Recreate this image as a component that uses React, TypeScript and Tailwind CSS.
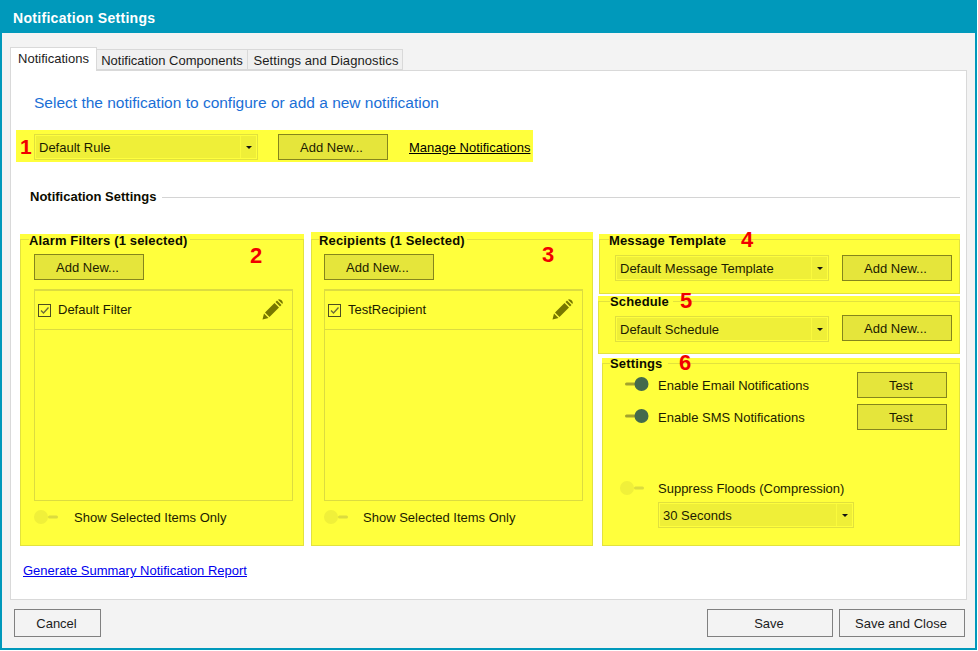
import type { ReactNode } from "react"

const font = { fontFamily: '"Liberation Sans", Arial, sans-serif' }

function YButton({ className = "" }: { className?: string }) {
  return (
    <button className={`flex h-[26px] w-[110px] items-center justify-center border border-[#85851c] bg-[#e5e53b] pr-[3px] pt-[2px] text-[13px] text-[#1c1c00] ${className}`}>
      Add New...
    </button>
  )
}

function TestButton({ className = "" }: { className?: string }) {
  return (
    <button className={`flex h-[26px] w-[90px] items-center justify-center border border-[#85851c] bg-[#e5e53b] pr-[2px] pt-[2px] text-[13px] text-[#1c1c00] ${className}`}>
      Test
    </button>
  )
}

function Select({ label, className = "" }: { label: string; className?: string }) {
  return (
    <div className={`flex h-[26px] items-stretch border border-[#e0e03e] p-px text-[13px] text-[#1c1c00] ${className}`}>
      <div className="flex flex-1 items-center bg-[#efef38] pl-[3px] pt-px">{label}</div>
      <div className="flex w-[16px] items-center justify-center border-l border-[#fafa3c] bg-[#efef38]">
        <span className="h-0 w-0 border-x-[3px] border-t-[3px] border-x-transparent border-t-[#111]" />
      </div>
    </div>
  )
}

function Toggle({ on, className = "" }: { on?: boolean; className?: string }) {
  return (
    <svg width="24" height="14" viewBox="0 0 24 14" className={className}>
      {on ? (
        <>
          <rect x="0" y="5.5" width="12" height="3" rx="1.5" fill="#a3a32c" />
          <circle cx="16.5" cy="7" r="7" fill="#446a4c" />
        </>
      ) : (
        <>
          <circle cx="7" cy="7" r="7" fill="#f0f03a" />
          <rect x="14" y="5.5" width="10" height="3" rx="1.5" fill="#dcdc3e" />
        </>
      )}
    </svg>
  )
}

function Pencil({ className = "" }: { className?: string }) {
  return (
    <svg width="21" height="21" viewBox="0 0 21 21" className={className}>
      <g fill="#787800">
        <path d="M0.5 20.5 L2 14.5 L6.5 19 Z" />
        <path d="M3 13.5 L12.5 4 L17 8.5 L7.5 18 Z" />
        <path d="M13.5 3 L15 1.5 L19.5 6 L18 7.5 Z" />
        <path d="M16 0.8 L17 0.2 Q20.8 1 20.8 4 L20.3 5 Z" />
      </g>
    </svg>
  )
}

function Num({ n, className }: { n: string; className: string }) {
  return <span className={`absolute text-[22px] font-bold leading-none text-[#f00000] ${className}`}>{n}</span>
}

function Group({ title, legend, children, className = "" }: { title: string; legend: string; children: ReactNode; className?: string }) {
  return (
    <div className={`relative bg-[#ffff3c] ${className}`}>
      <fieldset className="h-full border border-[#e2e23e]">
        <legend className={`text-[13px] font-bold tracking-[0.15px] text-[#0c0c00] ${legend}`}>{title}</legend>
        {children}
      </fieldset>
    </div>
  )
}

function FilterList({ item, pencilClass }: { item: string; pencilClass: string }) {
  return (
    <div className="mt-[9px] h-[212px] w-[259px] border border-t-[2px] border-[#dcdc40]">
      <div className="relative flex h-[39px] items-center border-b border-[#dcdc40] pl-[3px] text-[13px] text-[#1c1c00]">
        <span className="flex h-[13px] w-[13px] items-center justify-center border border-[#4d4d22]">
          <svg width="11" height="11" viewBox="0 0 11 11" fill="none" stroke="#6b6b3a" strokeWidth="1.3">
            <path d="M2 5.5 L4.5 8 L9.5 2.5" />
          </svg>
        </span>
        <span className="ml-[7px]">{item}</span>
        <Pencil className={pencilClass} />
      </div>
    </div>
  )
}

function ShowSelected({ textMargin }: { textMargin: string }) {
  return (
    <div className="mt-[9px] flex h-[14px] items-center text-[13px] text-[#1c1c00]">
      <Toggle />
      <span className={`pt-[2px] ${textMargin}`}>Show Selected Items Only</span>
    </div>
  )
}

export default function App() {
  return (
    <div className="h-[651px] w-[978px] overflow-hidden bg-white" style={font}>
      <div className="flex h-[650px] w-[977px] flex-col border-x-[2px] border-b-[2px] border-[#0099bb] bg-[#f3f3f3]">
        <div className="flex h-[33px] shrink-0 items-center bg-[#0099bb] pl-[11px] pt-[4px] text-[14px] font-bold tracking-[0.3px] text-white">
          Notification Settings
        </div>

        <div className="flex flex-1 flex-col px-[8px] pt-[14px]">
          {/* tabs */}
          <div className="flex h-[23px] items-end text-[13px] text-[#1c1c1c]">
            <div className="z-10 -mb-px flex h-[24px] w-[87px] items-center justify-center border border-b-0 border-[#d9d9d9] bg-white pb-[2px]">
              Notifications
            </div>
            <div className="flex h-[21px] w-[151px] items-center justify-center border-y border-r border-[#d9d9d9] bg-[#f0f0f0] pt-[2px]">
              Notification Components
            </div>
            <div className="flex h-[21px] w-[155px] items-center justify-center border-y border-r border-[#d9d9d9] bg-[#f0f0f0] pl-[2px] pt-[2px] tracking-[0.08px]">
              Settings and Diagnostics
            </div>
          </div>

          {/* tab panel */}
          <div className="h-[530px] border border-[#d9d9d9] bg-white">
            <h1 className="ml-[23px] mt-[22px] text-[15.5px] leading-[20px] text-[#1a6fd6]">
              Select the notification to configure or add a new notification
            </h1>

            <div className="relative ml-[5px] mt-[17px] flex h-[32px] w-[517px] items-center bg-[#ffff3c] pl-[18px] pt-[2px] text-[13px]">
              <span className="absolute left-[4px] top-[6px] text-[21px] font-bold leading-none text-[#f00000]">1</span>
              <Select label="Default Rule" className="w-[224px]" />
              <YButton className="ml-[20px]" />
              <a className="ml-[21px] pt-px text-black underline">Manage Notifications</a>
            </div>

            <div className="ml-[19px] mt-[26px] flex h-[18px] items-center">
              <span className="text-[13px] font-bold text-[#0c0c00]">Notification Settings</span>
              <span className="ml-[6px] mr-[6px] h-px flex-1 bg-[#d4d4d4]" />
            </div>

            <div className="mt-[26px] flex items-end pl-[9px]">
              <Group title="Alarm Filters (1 selected)" legend="ml-[8px] pr-[2px] pt-[4px] leading-[6px]" className="h-[312px] w-[284px]">
                <Num n="2" className="left-[230px] top-[11px]" />
                <div className="pl-[13px] pt-[10px]">
                  <YButton />
                  <FilterList item="Default Filter" pencilClass="absolute right-[9px] top-[8px]" />
                  <ShowSelected textMargin="ml-[16px]" />
                </div>
              </Group>

              <Group title="Recipients (1 Selected)" legend="ml-[7px] pr-[2px] pt-[4px] leading-[6px]" className="ml-[7px] h-[314px] w-[282px] pt-[2px]">
                <Num n="3" className="left-[231px] top-[12px]" />
                <div className="pl-[12px] pt-[10px]">
                  <YButton />
                  <FilterList item="TestRecipient" pencilClass="absolute right-[9px] top-[8px]" />
                  <ShowSelected textMargin="ml-[15px]" />
                </div>
              </Group>

              <div className="ml-[5px] flex w-[362px] flex-col items-end">
                <Group title="Message Template" legend="ml-[9px] pr-[4px] pt-[4px] leading-[6px]" className="h-[60px] w-[361px]">
                  <Num n="4" className="left-[142px] top-[-5px]" />
                  <div className="flex pl-[15px] pt-[11px]">
                    <Select label="Default Message Template" className="w-[214px]" />
                    <YButton className="ml-[13px]" />
                  </div>
                </Group>

                <Group title="Schedule" legend="ml-[11px] pr-[4px] pt-[2px] leading-[8px]" className="mt-[2px] h-[58px] w-[362px]">
                  <Num n="5" className="left-[82px] top-[-6px]" />
                  <div className="flex items-start pl-[16px] pt-[9px]">
                    <Select label="Default Schedule" className="mt-px w-[214px]" />
                    <YButton className="ml-[13px]" />
                  </div>
                </Group>

                <Group title="Settings" legend="ml-[7px] pr-[6px] pt-[2px] leading-[8px]" className="mt-[4px] h-[188px] w-[358px]">
                  <Num n="6" className="left-[77px] top-[-6px]" />
                  <div className="pl-[22px] pt-[4px] text-[13px] text-[#1c1c00]">
                    <div className="flex h-[26px] items-center">
                      <Toggle on className="mb-[3px]" />
                      <span className="ml-[9px] w-[199px] pt-[2px]">Enable Email Notifications</span>
                      <TestButton />
                    </div>
                    <div className="mt-[6px] flex h-[26px] items-center">
                      <Toggle on className="mb-[3px]" />
                      <span className="ml-[9px] w-[199px] pt-[2px]">Enable SMS Notifications</span>
                      <TestButton />
                    </div>
                    <div className="-ml-[5px] mt-[50px] flex h-[15px] items-center">
                      <Toggle />
                      <span className="ml-[14px] pt-[2px]">Suppress Floods (Compression)</span>
                    </div>
                    <Select label="30 Seconds" className="ml-[33px] mt-[7px] w-[196px]" />
                  </div>
                </Group>
              </div>
            </div>

            <a className="ml-[12px] mt-[17px] block text-[13px] leading-[16px] text-[#0000ee] underline">
              Generate Summary Notification Report
            </a>
          </div>

          {/* footer */}
          <div className="mt-[9px] flex text-[13px] text-[#1c1c1c]">
            <button className="ml-[4px] h-[28px] w-[87px] border border-[#808080] bg-[#f3f3f3] pr-[2px] pt-px">Cancel</button>
            <button className="ml-auto h-[28px] w-[126px] border border-[#808080] bg-[#f3f3f3] pr-[2px] pt-px">Save</button>
            <button className="ml-[6px] mr-[2px] h-[28px] w-[126px] border border-[#808080] bg-[#f3f3f3] pr-[2px] pt-px">Save and Close</button>
          </div>
        </div>
      </div>
    </div>
  )
}
